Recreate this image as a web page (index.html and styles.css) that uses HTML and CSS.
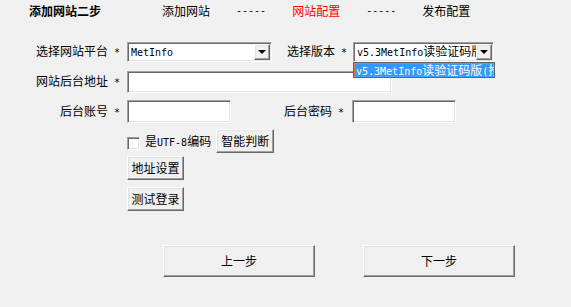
FILE: index.html
```html
<!DOCTYPE html>
<html>
<head>
<meta charset="utf-8">
<link rel="stylesheet" href="styles.css">
</head>
<body>
<div id="wizard">
    <div class="steps">
        <span class="title">添加网站二步</span>
        <span class="step s1">添加网站</span>
        <span class="dash">-----</span>
        <span class="step current">网站配置</span>
        <span class="dash">-----</span>
        <span class="step">发布配置</span>
    </div>

    <div class="form">
        <div class="row r1">
            <label class="lbl">选择网站平台<span class="star">*</span></label>
            <div class="combo combo-site">
                <span class="val"><span class="en">MetInfo</span></span>
                <span class="arrow"></span>
            </div>
            <label class="lbl lbl2">选择版本<span class="star">*</span></label>
            <div class="combo combo-ver">
                <span class="val"><span class="en">v5.3MetInfo</span>读验证码版</span>
                <span class="arrow"></span>
                <ul class="droplist">
                    <li><span class="en">v5.3MetInfo</span>读验证码版<span class="en">(</span>推荐<span class="en">)</span></li>
                </ul>
            </div>
        </div>

        <div class="row r2">
            <label class="lbl">网站后台地址<span class="star">*</span></label>
            <div class="edit edit-url"></div>
        </div>

        <div class="row r3">
            <label class="lbl">后台账号<span class="star">*</span></label>
            <div class="edit edit-short"></div>
            <label class="lbl lbl3">后台密码<span class="star">*</span></label>
            <div class="edit edit-short"></div>
        </div>

        <div class="row r4 indent">
            <span class="check"></span>
            <span class="check-txt">是<span class="en">UTF-8</span>编码</span>
            <button class="btn btn-small">智能判断</button>
        </div>

        <div class="row r5 indent">
            <button class="btn btn-small">地址设置</button>
        </div>

        <div class="row r6 indent">
            <button class="btn btn-small">测试登录</button>
        </div>
    </div>

    <div class="footer">
        <button class="btn btn-big">上一步</button>
        <button class="btn btn-big">下一步</button>
    </div>
</div>
</body>
</html>
```

FILE: styles.css
```css
* {
    margin: 0;
    padding: 0;
    box-sizing: border-box;
}

li {
    list-style: none;
}

body {
    width: 571px;
    height: 307px;
    background: #f0f0f0;
    color: #000;
    font: 12px/14px "Noto Sans CJK SC", "Liberation Sans", sans-serif;
    overflow: hidden;
}

/* 半角字符，6px 宽 */
.en {
    font-family: "DejaVu Sans Mono", monospace;
    font-size: 10px;
}

/* 顶部步骤 */
.steps {
    display: flex;
    align-items: center;
    height: 22px;
    white-space: nowrap;
}

.steps span {
    flex-shrink: 0;
}

.steps .title {
    margin-left: 29px;
    width: 72px;
    font-weight: bold;
}

.steps .s1 {
    margin-left: 61px;
}

.steps .dash {
    margin: 0 26px;
    font-family: "DejaVu Sans Mono", monospace;
    font-size: 10px;
}

.steps .current {
    color: #f00;
}

/* 表单 */
.form {
    margin-top: 20px;
}

.row {
    display: flex;
    align-items: center;
}

.lbl {
    width: 120px;
    text-align: right;
    margin-right: 7px;
}

.lbl .star {
    display: inline-block;
    width: 12px;
    text-align: right;
    font-family: "DejaVu Sans Mono", monospace;
    font-size: 10px;
}

.lbl2 {
    width: 75px;
    margin-right: 6px;
}

.lbl3 {
    width: 113px;
    margin-right: 8px;
}

.indent {
    padding-left: 127px;
}

.r1 { height: 20px; }
.r2 { height: 22px; margin-top: 9px; }
.r3 { height: 23px; margin-top: 7px; }
.r4 { height: 24px; margin-top: 6px; }
.r5 { height: 24px; margin-top: 3px; }
.r6 { height: 24px; margin-top: 7px; }

/* 凹陷的输入框 */
.edit,
.combo,
.check {
    background: #fff;
    border: 1px solid;
    border-color: #a0a0a0 #fff #fff #a0a0a0;
    box-shadow: inset 1px 1px #696969, inset -1px -1px #e3e3e3;
}

.edit {
    height: 100%;
}

.edit-url {
    width: 265px;
}

.edit-short {
    width: 104px;
}

/* 下拉框 */
.combo {
    position: relative;
    height: 20px;
    display: flex;
    align-items: center;
}

.combo-site {
    width: 145px;
}

.combo-ver {
    width: 141px;
}

.combo .val {
    flex: 1;
    padding-left: 3px;
    white-space: nowrap;
    overflow: hidden;
}

.combo .arrow {
    position: relative;
    width: 16px;
    height: 16px;
    margin-right: 1px;
    background: #f0f0f0;
    border: 1px solid;
    border-color: #fff #696969 #696969 #fff;
    box-shadow: inset -1px -1px #a0a0a0, inset 1px 1px #e3e3e3;
}

.combo .arrow:after {
    content: "";
    position: absolute;
    left: 3px;
    top: 5px;
    border-style: solid;
    border-width: 4px 4px 0 4px;
    border-color: #000 transparent transparent transparent;
}

.droplist {
    position: absolute;
    left: -1px;
    top: 19px;
    width: 142px;
    height: 16px;
    z-index: 10;
    background: #3399ff;
    border: 1px solid #646464;
    color: #fff;
    white-space: nowrap;
    overflow: hidden;
}

.droplist li {
    height: 14px;
    line-height: 14px;
    padding-left: 2px;
    outline: 1px dotted #d09050;
    outline-offset: -1px;
}

/* 复选框 */
.check {
    width: 13px;
    height: 13px;
    margin-top: 4px;
}

.check-txt {
    margin-left: 5px;
    margin-top: 2px;
}

/* 凸起的按钮 */
.btn {
    font: inherit;
    color: #000;
    background: #f0f0f0;
    border: 1px solid;
    border-color: #fff #696969 #696969 #fff;
    box-shadow: inset -1px -1px #a0a0a0, inset 1px 1px #e3e3e3;
}

.btn-small {
    width: 58px;
    height: 24px;
    font-size: 12px;
}

.r4 .btn-small {
    margin-left: 5px;
}

.r5 .btn-small,
.r6 .btn-small {
    width: 57px;
}

.footer {
    display: flex;
    gap: 48px;
    padding-left: 163px;
    margin-top: 34px;
}

.btn-big {
    width: 152px;
    height: 32px;
}
```
